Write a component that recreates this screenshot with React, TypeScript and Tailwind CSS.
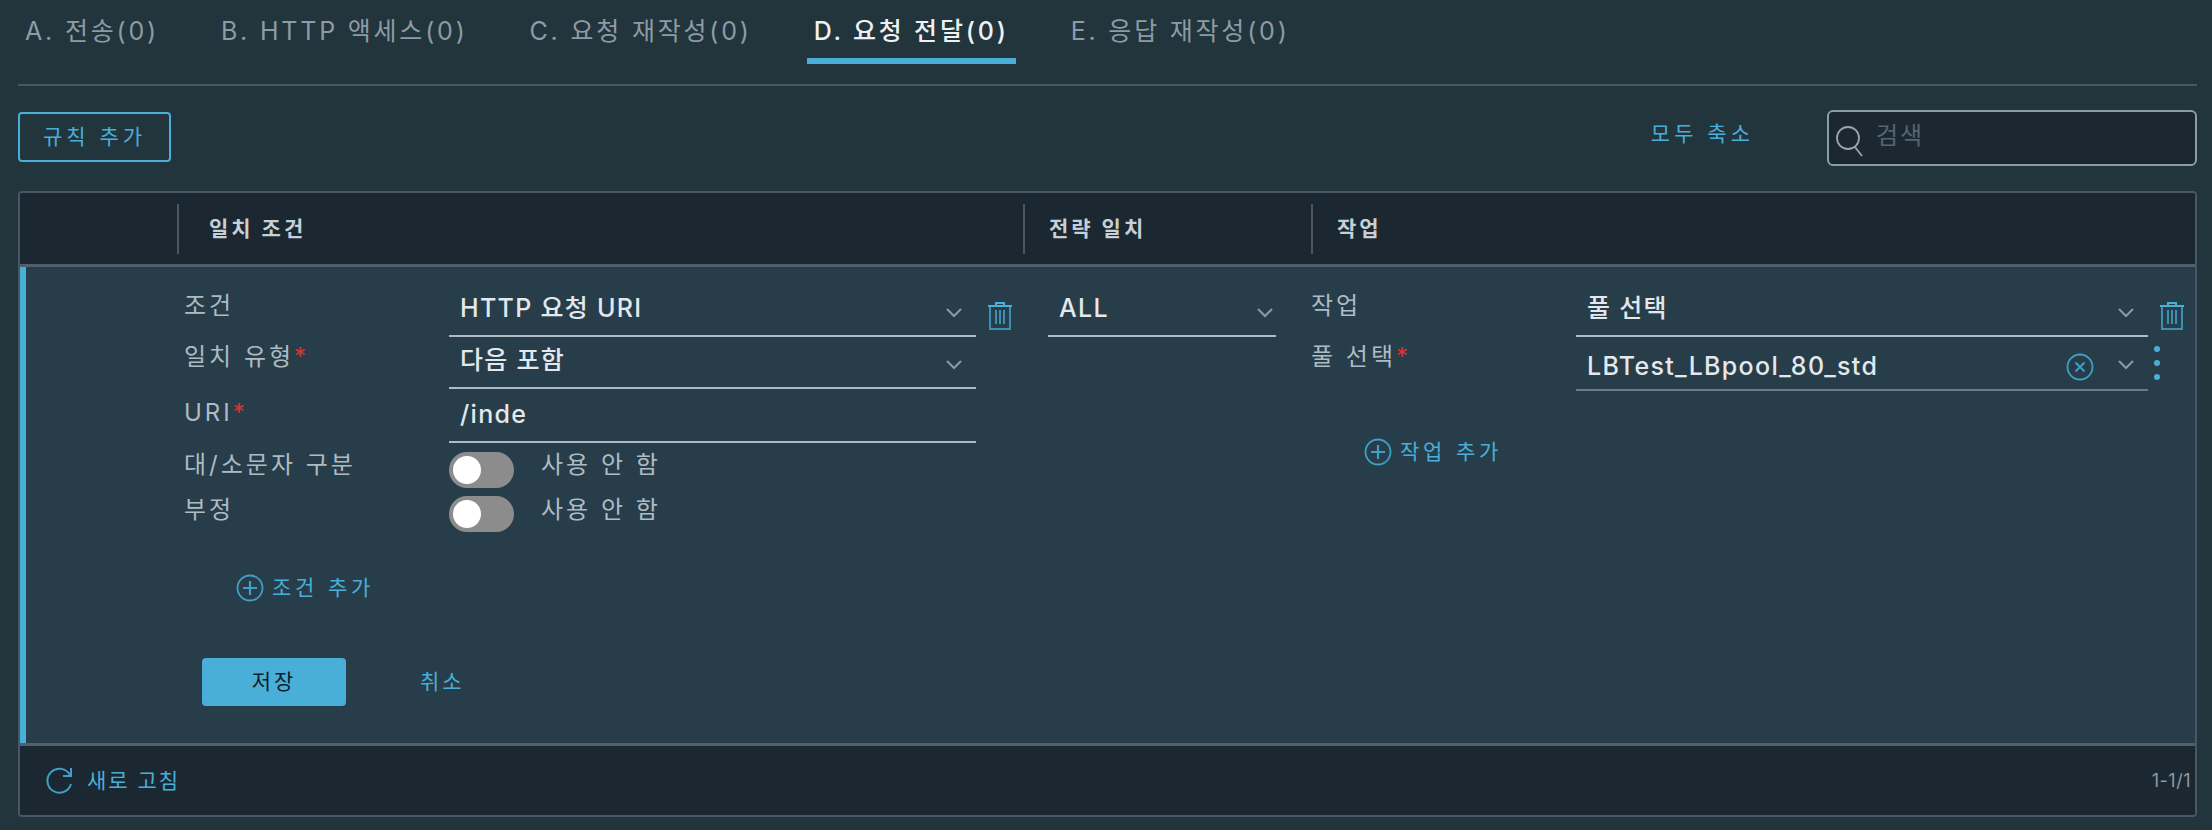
const tabs = [
  { name: "A. 전송(0)" },
  { name: "B. HTTP 액세스(0)" },
  { name: "C. 요청 재작성(0)" },
  { name: "D. 요청 전달(0)", active: true },
  { name: "E. 응답 재작성(0)" },
];

const Chevron = () => (
  <svg width="16" height="10" viewBox="0 0 16 10" fill="none" className="mb-[5px] shrink-0">
    <path d="M1 1l7 7 7-7" stroke="#8c9aa3" strokeWidth="2" />
  </svg>
);

const Trash = () => (
  <svg width="24" height="28" viewBox="0 0 24 28" fill="none" className="shrink-0">
    <path d="M8 3V1h8v2M0 4h24" stroke="#49afd9" strokeWidth="2" />
    <path d="M2 5v22h20V5" stroke="#3b8fb3" strokeWidth="2" />
    <path d="M8 8v14M12 8v14M16 8v14" stroke="#3b8fb3" strokeWidth="2" />
  </svg>
);

const Plus = () => (
  <svg width="28" height="28" viewBox="0 0 28 28" fill="none" className="shrink-0">
    <circle cx="14" cy="14" r="12.5" stroke="#3f9fc6" strokeWidth="1.8" />
    <path d="M14 7v14M7 14h14" stroke="#3f9fc6" strokeWidth="2.2" />
  </svg>
);

const Required = () => <span className="text-[#d6372f]">*</span>;

const Toggle = () => (
  <div className="flex h-[36px] w-[65px] shrink-0 items-center rounded-full bg-[#8c8c8c] pl-[4px]">
    <div className="size-[28px] rounded-full bg-white" />
  </div>
);

const AddLink = ({ label }: { label: string }) => (
  <div className="flex items-center gap-[8px] text-[21px] tracking-[3.8px] text-[#49afd9]">
    <Plus />
    <span>{label}</span>
  </div>
);

type FieldProps = {
  value: string;
  line?: string;
  pad?: string;
  children?: React.ReactNode;
};

const Field = ({ value, line = "border-[#adbbc4]", pad = "pb-[12px] pr-[14px]", children }: FieldProps) => (
  <div className={`flex h-full w-full items-end justify-between border-b-2 pl-[11px] ${pad} ${line}`}>
    <span className="text-[25px] leading-[30px] font-medium tracking-[1.3px] text-[#e3e8ec]">{value}</span>
    {children}
  </div>
);

const Label = ({ children }: { children: React.ReactNode }) => (
  <div className="text-[24px] leading-[30px] tracking-[3px] text-[#adbbc4]">{children}</div>
);

export default function App() {
  return (
    <div className="h-[830px] w-[2212px] overflow-hidden bg-[#22343c] pl-[18px] pr-[15px] font-['Inter','Noto_Sans_CJK_KR',sans-serif]">
      <div className="flex h-[86px] items-start gap-[48px] border-b-2 border-[#485764]">
        {tabs.map((tab) => (
          <div
            key={tab.name}
            className={`flex h-[64px] items-center whitespace-nowrap px-[7px] text-[25px] tracking-[2.8px] ${
              tab.active ? "border-b-[6px] border-[#49afd9] pt-[6px] font-medium text-[#eef1f3]" : "text-[#8c9ba5]"
            }`}
          >
            {tab.name}
          </div>
        ))}
      </div>

      <div className="flex h-[105px] items-start pt-[24px]">
        <button className="mt-[2px] h-[50px] w-[153px] rounded-[4px] border-2 border-[#49afd9] text-[21px] tracking-[4px] text-[#49afd9]">
          규칙 추가
        </button>
        <div className="ml-auto mt-[8px] text-[21px] tracking-[4px] text-[#49afd9]">모두 축소</div>
        <div className="ml-[73px] flex h-[56px] w-[370px] items-center gap-[13px] rounded-[6px] border-2 border-[#8c9ba5] bg-[#1b2831] pl-[6px]">
          <svg width="28" height="34" viewBox="0 0 28 34" fill="none" className="mt-[6px] shrink-0">
            <circle cx="13" cy="14" r="11" stroke="#9aa6ae" strokeWidth="1.8" />
            <path d="M20 23l7 9" stroke="#9aa6ae" strokeWidth="1.8" />
          </svg>
          <span className="-mt-[4px] text-[24px] tracking-[2px] text-[#566570]">검색</span>
        </div>
      </div>

      <div className="overflow-hidden rounded-[4px] border-2 border-[#485764]">
        <div className="flex h-[71px] items-center bg-[#1b2831] text-[21px] font-bold tracking-[3px] text-[#c6d0d6]">
          <div className="w-[157px]" />
          <div className="flex h-[50px] w-[846px] items-center border-l-2 border-[#485764] pl-[30px]">일치 조건</div>
          <div className="flex h-[50px] w-[288px] items-center border-l-2 border-[#485764] pl-[24px]">전략 일치</div>
          <div className="flex h-[50px] flex-1 items-center border-l-2 border-[#485764] pl-[24px]">작업</div>
        </div>

        <div className="h-[482px] border-y-[3px] border-[#4f606c] bg-[#283d4a]">
          <div className="flex h-full border-l-[6px] border-[#49afd9]">
            <div className="flex w-[997px] flex-col pl-[158px] pt-[18px]">
              <div className="flex h-[52px]">
                <div className="w-[265px] pt-[6px]"><Label>조건</Label></div>
                <div className="w-[527px]">
                  <Field value="HTTP 요청 URI"><Chevron /></Field>
                </div>
                <div className="ml-[12px] pt-[17px]"><Trash /></div>
              </div>
              <div className="flex h-[52px]">
                <div className="w-[265px] pt-[5px]"><Label>일치 유형<Required /></Label></div>
                <div className="w-[527px]">
                  <Field value="다음 포함"><Chevron /></Field>
                </div>
              </div>
              <div className="flex h-[54px]">
                <div className="w-[265px] pt-[9px]"><Label>URI<Required /></Label></div>
                <div className="w-[527px]">
                  <Field value="/inde" />
                </div>
              </div>
              <div className="mt-[8px] flex h-[37px] items-center">
                <div className="-mt-[10px] w-[265px]"><Label>대/소문자 구분</Label></div>
                <Toggle />
                <div className="-mt-[10px] ml-[27px]"><Label>사용 안 함</Label></div>
              </div>
              <div className="mt-[8px] flex h-[36px] items-center">
                <div className="-mt-[8px] w-[265px]"><Label>부정</Label></div>
                <Toggle />
                <div className="-mt-[8px] ml-[27px]"><Label>사용 안 함</Label></div>
              </div>
              <div className="ml-[52px] mt-[40px]"><AddLink label="조건 추가" /></div>
              <div className="ml-[18px] mt-[54px] flex items-center">
                <button className="h-[48px] w-[144px] rounded-[4px] bg-[#49afd9] text-[21px] tracking-[3px] text-[#0f1e26]">
                  저장
                </button>
                <span className="ml-[74px] text-[21px] tracking-[3px] text-[#49afd9]">취소</span>
              </div>
            </div>

            <div className="w-[288px] pl-[25px] pr-[35px] pt-[18px]">
              <div className="h-[52px]">
                <Field value="ALL" pad="pb-[12px] pr-[3px]"><Chevron /></Field>
              </div>
            </div>

            <div className="flex-1 pt-[18px]">
              <div className="flex h-[52px]">
                <div className="w-[265px] pt-[6px]"><Label>작업</Label></div>
                <div className="w-[572px]">
                  <Field value="풀 선택"><Chevron /></Field>
                </div>
                <div className="ml-[12px] pt-[17px]"><Trash /></div>
              </div>
              <div className="flex h-[54px]">
                <div className="w-[265px] pt-[5px]"><Label>풀 선택<Required /></Label></div>
                <div className="w-[572px]">
                  <Field value="LBTest_LBpool_80_std" line="border-[#6f7b84]" pad="pb-[8px] pr-[14px]">
                    <div className="flex items-center gap-[24px]">
                      <svg width="28" height="28" viewBox="0 0 28 28" fill="none" className="shrink-0">
                        <circle cx="14" cy="14" r="12.5" stroke="#3f9fc6" strokeWidth="1.8" />
                        <path d="M9.5 9.5l9 9M18.5 9.5l-9 9" stroke="#3f9fc6" strokeWidth="2" />
                      </svg>
                      <Chevron />
                    </div>
                  </Field>
                </div>
                <div className="ml-[6px] flex flex-col gap-[8px] pt-[9px]">
                  <div className="size-[6px] rounded-full bg-[#49afd9]" />
                  <div className="size-[6px] rounded-full bg-[#49afd9]" />
                  <div className="size-[6px] rounded-full bg-[#49afd9]" />
                </div>
              </div>
              <div className="ml-[53px] mt-[45px]"><AddLink label="작업 추가" /></div>
            </div>
          </div>
        </div>

        <div className="flex h-[69px] items-center justify-between bg-[#1b2831] pl-[26px] pr-[4px]">
          <div className="flex items-center gap-[14px] text-[21px] tracking-[2px] text-[#49afd9]">
            <svg width="27" height="30" viewBox="0 0 27 30" fill="none" className="shrink-0">
              <path d="M24 9A12 12 0 1 0 25 18" stroke="#3f9fc6" strokeWidth="2" />
              <path d="M25 2v8h-8" stroke="#3f9fc6" strokeWidth="2" />
            </svg>
            <span>새로 고침</span>
          </div>
          <span className="text-[18px] tracking-[0.5px] text-[#8c9ba5]">1-1/1</span>
        </div>
      </div>
    </div>
  );
}
